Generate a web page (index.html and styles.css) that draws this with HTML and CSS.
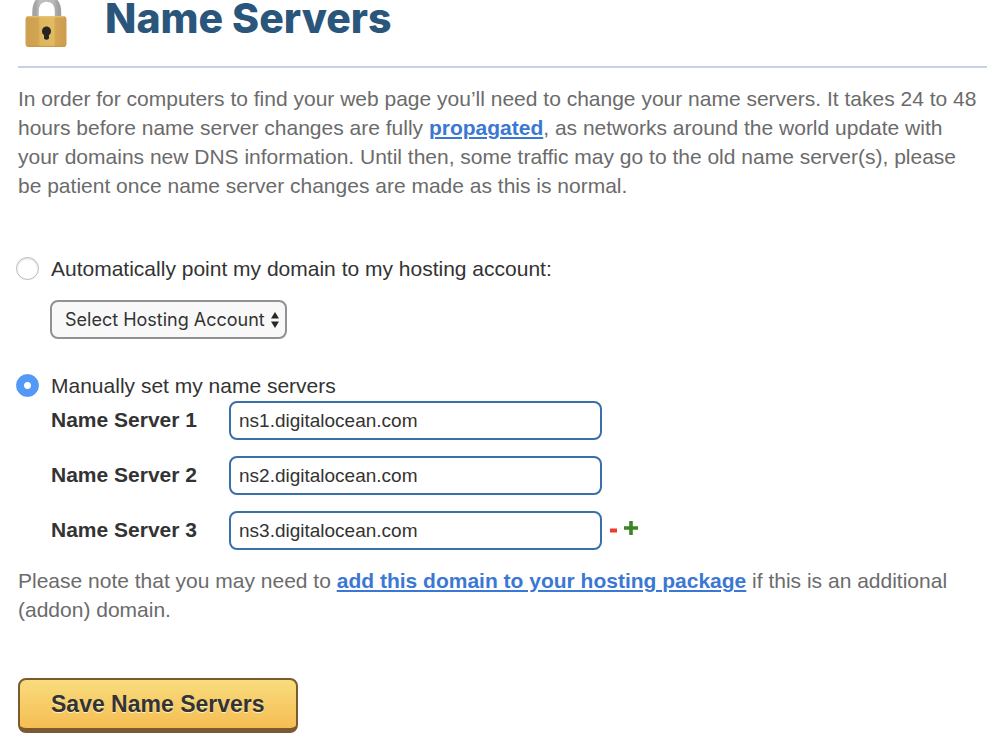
FILE: index.html
```html
<!DOCTYPE html>
<html lang="en">
<head>
<meta charset="utf-8">
<meta name="viewport" content="width=device-width, initial-scale=1">
<title>Name Servers</title>
<link rel="stylesheet" href="styles.css">
</head>
<body>
<main class="page">
  <header class="page-header">
    <svg class="lock" viewBox="0 0 44 48" aria-hidden="true">
      <defs>
        <linearGradient id="brass">
          <stop offset="0" stop-color="#cda052"/>
          <stop offset="0.3" stop-color="#d1a451"/>
          <stop offset="0.36" stop-color="#dfb65e"/>
          <stop offset="0.68" stop-color="#e2ba65"/>
          <stop offset="0.74" stop-color="#d3a553"/>
          <stop offset="1" stop-color="#cb9c4e"/>
        </linearGradient>
        <linearGradient id="steel">
          <stop offset="0" stop-color="#a4a4a4"/>
          <stop offset="0.2" stop-color="#c0c0c0"/>
          <stop offset="0.8" stop-color="#b8b8b8"/>
          <stop offset="1" stop-color="#a0a0a0"/>
        </linearGradient>
      </defs>
      <path d="M11.500 18V12C11.500 3 15.500-1.500 22.500-1.500S34 3 34 12V18" fill="none" stroke="url(#steel)" stroke-width="6.500"/>
      <rect x="1.500" y="16" width="41" height="31" rx="3.500" fill="url(#brass)"/>
      <path d="M4 16.800H40" stroke="#ebc979" stroke-width="1"/>
      <path d="M3 46.300H41" stroke="#c79645" stroke-width="1"/>
      <path d="M22.500 26.500C19.800 26.500 18 28.700 18 31.200C18 33.200 19 34.300 20.100 35.300L20 38.400Q22.500 41 25 38.400L24.900 35.300C26 34.300 27 33.200 27 31.200C27 28.700 25.200 26.500 22.500 26.500Z" fill="#26251f"/>
    </svg>
    <h1 class="title">Name Servers</h1>
  </header>

  <p class="copy intro">In order for computers to find your web page you’ll need to change your name servers. It takes 24 to 48 hours before name server changes are fully <a class="link" href="#propagated">propagated</a>, as networks around the world update with your domains new DNS information. Until then, some traffic may go to the old name server(s), please be patient once name server changes are made as this is normal.</p>

  <form class="form">
    <div class="choice">
      <input class="radio" type="radio" name="mode" id="auto" value="auto">
      <label for="auto">Automatically point my domain to my hosting account:</label>
    </div>
    <div class="select-wrap">
      <select class="select" aria-label="Hosting account">
        <option>Select Hosting Account</option>
      </select>
      <svg class="arrows" viewBox="0 0 8 16" aria-hidden="true"><path d="M0 6.500 4 0l4 6.500ZM0 9.500h8L4 16Z" fill="#262626"/></svg>
    </div>
    <div class="choice">
      <input class="radio" type="radio" name="mode" id="manual" value="manual" checked>
      <label for="manual">Manually set my name servers</label>
    </div>
    <div class="servers">
      <div class="server">
        <label class="server-label" for="ns1">Name Server 1</label>
        <input class="field" type="text" id="ns1" value="ns1.digitalocean.com">
      </div>
      <div class="server">
        <label class="server-label" for="ns2">Name Server 2</label>
        <input class="field" type="text" id="ns2" value="ns2.digitalocean.com">
      </div>
      <div class="server">
        <label class="server-label" for="ns3">Name Server 3</label>
        <input class="field" type="text" id="ns3" value="ns3.digitalocean.com">
        <div class="actions">
          <button class="icon-button" type="button" aria-label="Remove name server"><svg class="minus" viewBox="0 0 8 14" aria-hidden="true"><path d="M0 7.500h7v4H0Z" fill="#ee3b2b"/></svg></button>
          <button class="icon-button" type="button" aria-label="Add name server"><svg class="plus" viewBox="0 0 14 14" aria-hidden="true"><path d="M5.200 0h3.600v5.200H14v3.600H8.800V14H5.200V8.800H0V5.200h5.200Z" fill="#3c8428"/></svg></button>
        </div>
      </div>
    </div>
    <p class="copy note">Please note that you may need to <a class="link" href="#hosting">add this domain to your hosting package</a> if this is an additional (addon) domain.</p>
    <button class="save" type="submit">Save Name Servers</button>
  </form>
</main>
</body>
</html>
```
FILE: styles.css
```css
* {
  box-sizing: border-box;
}

body {
  margin: 0;
  background: #fff;
  color: #333;
  font: 21px/29px "Liberation Sans", Arial, sans-serif;
}

.page {
  padding: 0 13px 16px 18px;
}

.page-header {
  display: flex;
  align-items: flex-start;
  gap: 37px;
  padding: 0 0 18px 6px;
  border-bottom: 2px solid #c6d3e6;
}

.lock {
  flex: none;
  width: 44px;
  height: 48px;
}

.title {
  margin: 0;
  color: #2b567c;
  font: 800 41px/37px "Inter", sans-serif;
}

.copy {
  margin: 0;
  padding-right: 6px;
  color: #6b6b6b;
}

.intro {
  padding-top: 16px;
}

.link {
  color: #3b78d4;
  font-weight: bold;
  text-decoration-thickness: 2px;
  text-underline-offset: 2px;
}

.form {
  margin-top: 54px;
}

.choice {
  display: flex;
  align-items: center;
  gap: 12px;
  margin-left: -2px;
}

.radio {
  appearance: none;
  flex: none;
  width: 23px;
  height: 23px;
  margin: 0;
  border: 1px solid #b9b9b9;
  border-radius: 50%;
  background: #fff;
  box-shadow: inset 0 1px 2px #ddd;
}

.radio:checked {
  border-color: #4f97f7;
  background: radial-gradient(circle, #fff 3px, #5299f8 4px);
  box-shadow: none;
}

.select-wrap {
  position: relative;
  width: 237px;
  margin: 17px 0 32px 32px;
}

.select {
  appearance: none;
  display: block;
  width: 100%;
  height: 39px;
  padding: 0 16px 0 13px;
  border: 2px solid #8d9296;
  border-radius: 8px;
  background: #f8f8f8;
  color: #333;
  font: 18px "Inter", sans-serif;
}

.arrows {
  position: absolute;
  top: 12px;
  right: 8px;
  width: 8px;
  height: 16px;
  pointer-events: none;
}

.servers {
  display: grid;
  gap: 16px;
  margin: 1px 0 0 33px;
}

.server {
  display: flex;
  align-items: center;
}

.server-label {
  flex: none;
  width: 178px;
  padding-bottom: 2px;
  font-weight: bold;
}

.field {
  width: 373px;
  height: 39px;
  padding: 0 8px;
  border: 2px solid #3a70a9;
  border-radius: 8px;
  background: #fff;
  color: #333;
  font: 19px "Liberation Sans", Arial, sans-serif;
}

.actions {
  display: flex;
  gap: 6px;
  margin-left: 8px;
}

.icon-button {
  display: flex;
  padding: 0 0 6px;
  border: 0;
  background: none;
  cursor: pointer;
}

.minus {
  width: 8px;
  height: 14px;
}

.plus {
  width: 14px;
  height: 14px;
}

.note {
  padding-top: 16px;
}

.save {
  display: block;
  height: 55px;
  margin-top: 54px;
  padding: 0 31px;
  border: 2px solid #7b5a31;
  border-bottom-width: 5px;
  border-radius: 8px;
  background: linear-gradient(#f8dc7d, #f5bd52);
  color: #333;
  font: bold 23px "Liberation Sans", Arial, sans-serif;
  text-shadow: 0 1px 1px #fff3c8;
  cursor: pointer;
}
```
